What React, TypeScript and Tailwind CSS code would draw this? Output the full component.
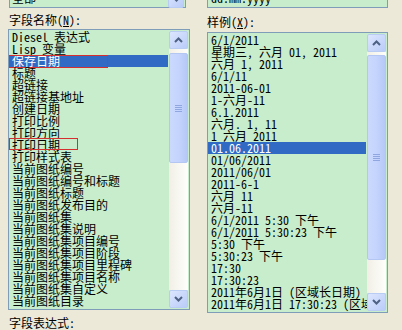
const fieldNames = [
  "Diesel 表达式",
  "Lisp 变量",
  "保存日期",
  "标题",
  "超链接",
  "超链接基地址",
  "创建日期",
  "打印比例",
  "打印方向",
  "打印日期",
  "打印样式表",
  "当前图纸编号",
  "当前图纸编号和标题",
  "当前图纸标题",
  "当前图纸发布目的",
  "当前图纸集",
  "当前图纸集说明",
  "当前图纸集项目编号",
  "当前图纸集项目阶段",
  "当前图纸集项目里程碑",
  "当前图纸集项目名称",
  "当前图纸集自定义",
  "当前图纸目录",
];

const samples = [
  "6/1/2011",
  "星期三, 六月 01, 2011",
  "六月 1, 2011",
  "6/1/11",
  "2011-06-01",
  "1-六月-11",
  "6.1.2011",
  "六月. 1, 11",
  "1 六月 2011",
  "01.06.2011",
  "01/06/2011",
  "2011/06/01",
  "2011-6-1",
  "六月 11",
  "六月-11",
  "6/1/2011 5:30 下午",
  "6/1/2011 5:30:23 下午",
  "5:30 下午",
  "5:30:23 下午",
  "17:30",
  "17:30:23",
  "2011年6月1日 (区域长日期)",
  "2011年6月1日 17:30:23 (区域长日期)",
];

const Chevron = ({ up }: { up?: boolean }) => (
  <svg width="9" height="6" viewBox="0 0 9 6">
    <path
      d={up ? "M1 5 L4.5 1.5 L8 5" : "M1 1 L4.5 4.5 L8 1"}
      fill="none"
      stroke="#4D6185"
      strokeWidth="2"
    />
  </svg>
);

const ArrowButton = ({ up }: { up?: boolean }) => (
  <div className="flex h-[18px] w-full items-center justify-center rounded-[2px] border border-[#B9CCF4] bg-gradient-to-br from-[#DCE6FE] to-[#B9CBF8]">
    <Chevron up={up} />
  </div>
);

const Grip = () => (
  <div className="flex flex-col gap-[1px]">
    {[0, 1, 2, 3].map((i) => (
      <div key={i} className="h-[1px] w-[7px] bg-[#8FA6E0]" />
    ))}
  </div>
);

const ScrollBar = ({ thumb }: { thumb: string }) => (
  <div className="flex w-[19px] flex-col py-[1px]">
    <ArrowButton up />
    <div className="flex flex-1 flex-col bg-gradient-to-r from-[#F1EFE6] to-[#FEFEFB]">
      <div
        className={`flex items-center justify-center rounded-[2px] border border-[#B4C7F2] bg-gradient-to-r from-[#CBD9FD] via-[#C4D4FD] to-[#B6C8F7] ${thumb}`}
      >
        <Grip />
      </div>
    </div>
    <ArrowButton />
  </div>
);

export default function App() {
  return (
    <div className="h-[330px] w-[402px] overflow-hidden bg-[#ECE9D8] font-['Noto_Sans_Mono_CJK_SC','Noto_Sans_CJK_SC','Liberation_Mono',monospace] text-[12px] leading-[12px] text-black">
      <div className="flex pl-[8px]">
        {/* left column */}
        <div className="w-[182px]">
          <div className="-mt-[12px] ml-[1px] flex h-[20px] w-[177px] border border-[#7F9DB9] bg-[#C7EDCC]">
            <span className="pl-[2px] pt-[3px]">全部</span>
            <div className="mt-[1px] ml-auto mr-[1px] h-[16px] w-[16px]">
              <ArrowButton />
            </div>
          </div>
          <div className="mt-[6px] h-[12px] pl-[1px]">
            字段名称(<u>N</u>):
          </div>
          <div className="mt-[3px] flex h-[281px] border border-[#7F9DB9] bg-[#C7EDCC] pr-[1px]">
            <div className="flex-1 overflow-hidden pt-[1px] pr-[1px]">
              {fieldNames.map((name, i) => (
                <div
                  key={name}
                  className={`relative h-[12px] whitespace-nowrap pl-[3px] ${
                    i === 2 ? "bg-[#316AC5] text-white" : ""
                  }`}
                >
                  {name}
                  {i === 2 && (
                    <div className="absolute -left-[1px] top-0 h-[13px] w-[100px] border border-[#D62F2F]" />
                  )}
                  {i === 9 && (
                    <div className="absolute -top-[1px] left-0 h-[12px] w-[69px] border border-[#D62F2F]" />
                  )}
                </div>
              ))}
            </div>
            <ScrollBar thumb="mt-[4px] h-[110px]" />
          </div>
          <div className="mt-[7px] pl-[1px]">字段表达式:</div>
        </div>

        {/* right column */}
        <div className="ml-[17px] w-[181px]">
          <div className="-mt-[12px] flex h-[20px] w-[181px] border border-[#7F9DB9] bg-[#C7EDCC]">
            <span className="pl-[3px] pt-[3px]">dd.mm.yyyy</span>
          </div>
          <div className="mt-[8px] h-[12px]">
            样例(<u>X</u>):
          </div>
          <div className="mt-[4px] flex h-[281px] border border-[#7F9DB9] bg-[#C7EDCC] pr-[1px]">
            <div className="flex-1 overflow-hidden pt-[1px] pr-[1px]">
              {samples.map((s, i) => (
                <div
                  key={s}
                  className={`h-[12px] whitespace-nowrap pl-[3px] ${
                    i === 9 ? "bg-[#316AC5] text-white" : ""
                  }`}
                >
                  {s}
                </div>
              ))}
            </div>
            <ScrollBar thumb="mt-[3px] h-[205px]" />
          </div>
        </div>
      </div>
    </div>
  );
}
